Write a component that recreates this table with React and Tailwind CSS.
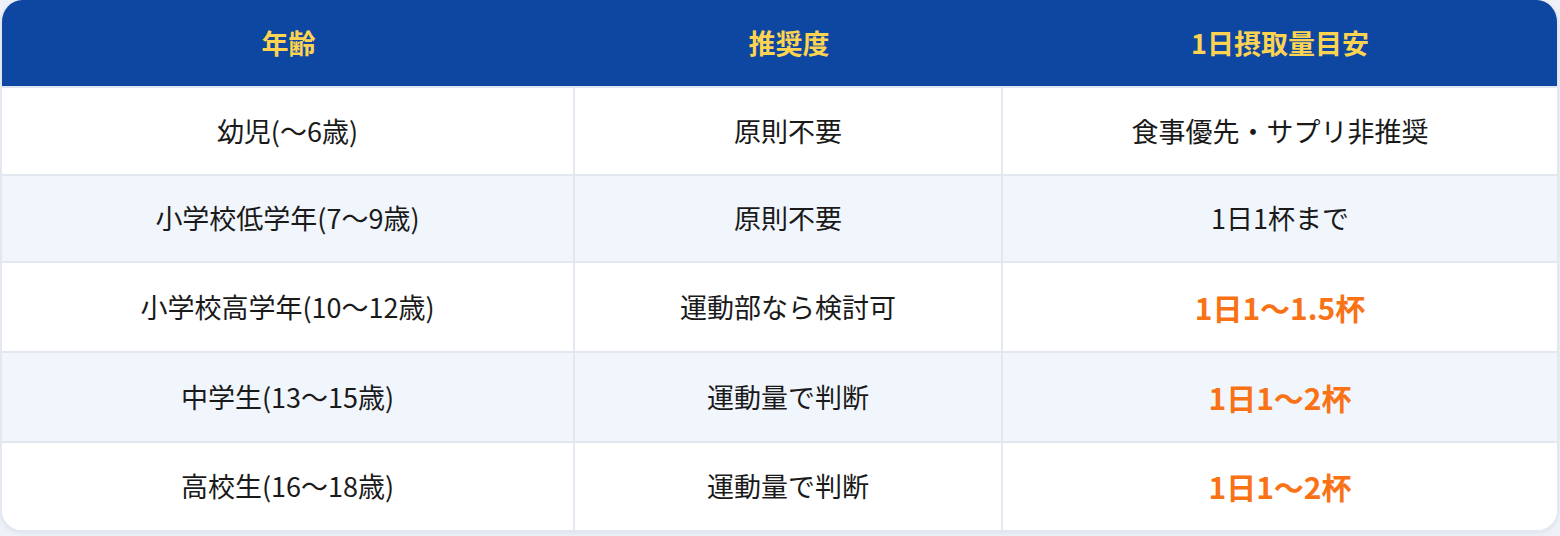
import React from 'react';

const rows = [
  { age: '幼児(〜6歳)', level: '原則不要', amount: '食事優先・サプリ非推奨', strong: false, h: 'h-[88px]' },
  { age: '小学校低学年(7〜9歳)', level: '原則不要', amount: '1日1杯まで', strong: false, h: 'h-[87px]' },
  { age: '小学校高学年(10〜12歳)', level: '運動部なら検討可', amount: '1日1〜1.5杯', strong: true, h: 'h-[90px]' },
  { age: '中学生(13〜15歳)', level: '運動量で判断', amount: '1日1〜2杯', strong: true, h: 'h-[90px]' },
  { age: '高校生(16〜18歳)', level: '運動量で判断', amount: '1日1〜2杯', strong: true, h: 'h-[87px]' },
];

const App = () => {
  return (
    <div className="w-[1560px] h-[536px] bg-[#eef2f8]" style={{ fontFamily: '"Noto Sans CJK JP", "Noto Sans", sans-serif' }}>
      {/* Table card */}
      <div className="w-[1559px] rounded-[22px] border-2 border-t-0 border-[#e3e8f0] bg-white overflow-hidden shadow-[0_2px_4px_rgba(15,40,90,0.06)]">
        {/* Header */}
        <div className="grid grid-cols-[573px_428px_1fr] h-[88px] bg-[#0d47a1] border-b-2 border-[#dfe6f1]">
          <div className="flex items-center justify-center text-[27px] font-bold text-[#fdd451]">年齢</div>
          <div className="flex items-center justify-center text-[27px] font-bold text-[#fdd451]">推奨度</div>
          <div className="flex items-center justify-center text-[27px] font-bold text-[#fdd451]">1日摂取量目安</div>
        </div>

        {/* Body rows */}
        {rows.map((r, i) => (
          <div
            key={i}
            className={`grid grid-cols-[573px_428px_1fr] ${r.h} ${i % 2 === 1 ? 'bg-[#f1f6fd]' : 'bg-white'} ${i < rows.length - 1 ? 'border-b-2 border-[#e3e8f0]' : ''}`}
          >
            <div className="flex items-center justify-center text-[27px] text-[#1a1a1a] border-r-2 border-[#e3e8f0]">{r.age}</div>
            <div className="flex items-center justify-center text-[27px] text-[#1a1a1a] border-r-2 border-[#e3e8f0]">{r.level}</div>
            {r.strong ? (
              <div className="flex items-center justify-center text-[30px] font-bold text-[#f97316]">{r.amount}</div>
            ) : (
              <div className="flex items-center justify-center text-[27px] text-[#1a1a1a]">{r.amount}</div>
            )}
          </div>
        ))}
      </div>
    </div>
  );
};

export default App;
